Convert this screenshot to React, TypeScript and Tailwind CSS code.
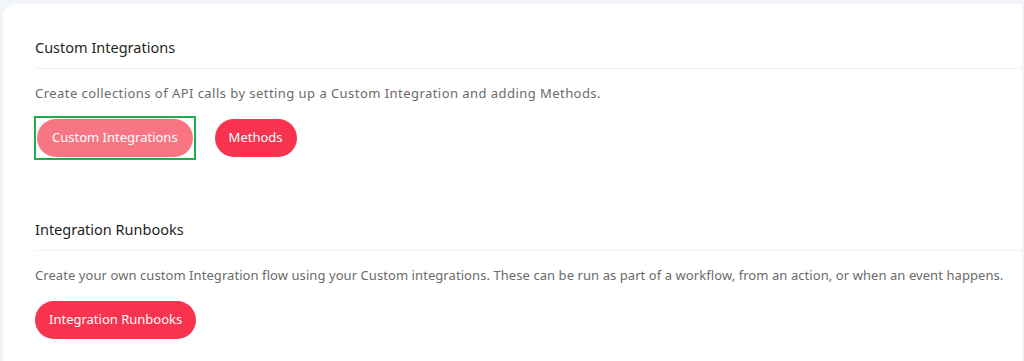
export default function App() {
  return (
    <div
      className="h-[361px] overflow-hidden bg-[#f1f4f9] pl-[3px] pr-[2px] pt-1"
      style={{ fontFamily: '"Noto Sans", "Open Sans", sans-serif' }}
    >
      <div className="h-full rounded-tl-xl bg-white pl-8">
        {/* Custom Integrations */}
        <section className="pt-[33px]">
          <h2 className="text-[14.5px] leading-5 text-[#1f1f1f]">Custom Integrations</h2>
          <div className="mt-[11px] h-px bg-[#edf1f5]" />
          <p className="mt-[16px] text-[13px] leading-4 tracking-[0.45px] text-[#6b6b6b]">
            Create collections of API calls by setting up a Custom Integration and adding Methods.
          </p>
          <div className="mt-[15px] flex items-center gap-[19px]">
            <div className="-ml-px border-2 border-[#1fae4b] p-px">
              <button className="h-[38px] rounded-full bg-[#f87683] pl-[15px] pr-[15px] text-[13px] text-white">
                Custom Integrations
              </button>
            </div>
            <button className="h-[38px] rounded-full bg-[#f7334f] px-[14px] text-[13px] text-white">
              Methods
            </button>
          </div>
        </section>

        {/* Integration Runbooks */}
        <section className="pt-[59px]">
          <h2 className="text-[14.5px] leading-5 text-[#1f1f1f]">Integration Runbooks</h2>
          <div className="mt-[11px] h-px bg-[#edf1f5]" />
          <p className="mt-[16px] text-[13px] leading-4 tracking-[0.07px] text-[#6b6b6b]">
            Create your own custom Integration flow using your Custom integrations. These can be run as part of a workflow, from an action, or when an event happens.
          </p>
          <div className="mt-[18px] flex">
            <button className="h-[38px] rounded-full bg-[#f7334f] px-[14px] text-[13px] text-white">
              Integration Runbooks
            </button>
          </div>
        </section>
      </div>
    </div>
  );
}
